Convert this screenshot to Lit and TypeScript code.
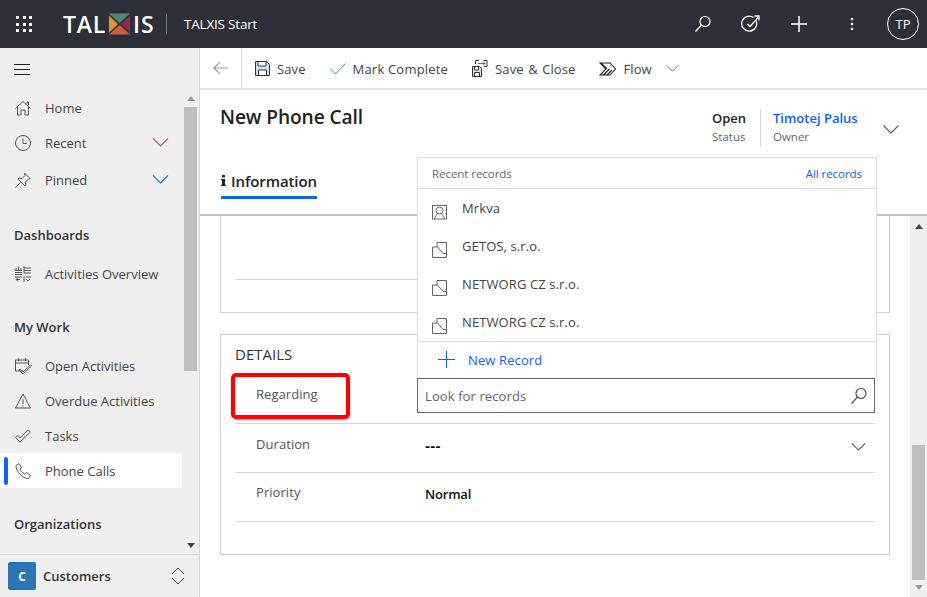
import { LitElement, html, css, svg } from "lit";
import { customElement } from "lit/decorators.js";

const chevron = (w: number, h: number, c: string) => html`<svg width=${w} height=${h} viewBox="0 0 16 9" fill="none" stroke=${c} stroke-width="1.2"><path d="M.5.5 8 8 15.5.5" /></svg>`;
const ic = (p: any, c = "#555") => html`<svg width="18" height="18" viewBox="0 0 18 18" fill="none" stroke=${c} stroke-width="1">${p}</svg>`;

const home = svg`<path d="M1.5 9.500 9 2.500l7.500 7M3.500 7.500V16H7v-5h4v5h3.500V7.500M13 5V3h1.500v3.500"/>`;
const clock = svg`<circle cx="9" cy="9" r="7.500"/><path d="M9 4.500V9.500H13"/>`;
const pin = svg`<path d="M1.500 16.500 6.500 11.500M10.500 2l5.500 5.500-1.500.5-3 3 .5 3-1 1-7-7 1-1 3 .5 3-3z"/>`;
const dash = svg`<path d="M1 5.500H8M1 7.500H8M1 9.500H8M2 5V3M4.500 5V1.500M7 5V3M10 1v7M10 3h7M10 5.500h7M10 8h7M1 12h7M6 14.500H2M4 12.500l-2 2 2 2M10 11v6M12 12h5M12 14l2 2 2-2"/>`;
const cal = svg`<path d="M9 14H1.500V3h13v5M1.500 6h13M4.500 1v3M11.500 1v3"/><path d="M6 12l3 3 7.500-7 1 1-8.500 8-4-4z"/>`;
const warn = svg`<path d="M9 2 1.500 16h15zM9 7v5M9 13.500v1"/>`;
const tasks = svg`<path d="M1.500 10.500 6 15 16.500 5 14 3 6 11 4 8.500z"/>`;
const phone = svg`<path d="M5 1.500 2 3.500C1.500 9 9 17 14.500 16.500L16.500 13.500 12.500 10.500 10.500 12C8.500 11 6.500 8.500 6 7L7.500 5.500z"/>`;
const person = svg`<rect x="1.500" y="2.500" width="14" height="13.500"/><circle cx="8.500" cy="7.500" r="3.500"/><path d="M3.500 16c.5-3 2-4.500 3.500-5.500M13.500 16c-.5-3-2-4.500-3.500-5.500"/>`;
const acct = svg`<path d="M6 6V1.500H15.500V16.500H1.500V6H6.500L12 12.500H15.500"/>`;
const lens = (c: string) => html`<svg width="18" height="18" viewBox="0 0 18 18" fill="none" stroke=${c} stroke-width="1.200"><circle cx="11" cy="6.500" r="5"/><path d="M7.500 10 1.500 16.500"/></svg>`;

@customElement("app-root")
export class AppRoot extends LitElement {
  static styles = css`
    :host { display: block; width: 927px; height: 597px; overflow: hidden; position: relative; font-family: "Open Sans", "Noto Sans", sans-serif; color: #333; font-size: 13px; background: #fff; }
    * { box-sizing: border-box; }
    svg { display: block; flex: none; }
    .top { height: 48px; background: #2c2f38; color: #fff; display: flex; align-items: center; }
    .waffle { margin-left: 16px; width: 16px; display: grid; grid-template-columns: repeat(3, 3px); gap: 3.500px; }
    .waffle i { width: 3px; height: 3px; background: #fff; }
    .logo { margin-left: 31px; display: flex; align-items: center; font: 600 23px "Open Sans", sans-serif; letter-spacing: .8px; width: 91px; }
    .logo svg { margin: 0 2px 0 2px; }
    .vsep { width: 1px; height: 20px; background: #777; margin-left: 12px; }
    .app { margin-left: 17px; font-size: 13.500px; letter-spacing: -.2px; }
    .top-r { margin-left: auto; display: flex; align-items: center; padding-right: 8px; }
    .top-r > * { flex: none; }
    .g29 { margin-left: 29px; }
    .g42 { margin-left: 42px; }
    .avatar { width: 32px; height: 32px; border: 1px solid #fff; border-radius: 50%; display: flex; align-items: center; justify-content: center; font-size: 13px; margin-left: 33px; }
    .body { display: flex; height: 549px; }
    .side { width: 200px; background: #efefef; border-right: 1px solid #d8d8d8; display: flex; flex-direction: column; }
    .burger { height: 42px; flex: none; display: flex; align-items: center; padding-left: 14px; }
    .burger div { width: 16px; height: 11px; border-top: 1px solid #222; border-bottom: 1px solid #222; position: relative; }
    .burger div::after { content: ""; position: absolute; left: 0; right: 0; top: 4px; height: 1px; background: #222; }
    .nav { flex: 1; min-height: 0; display: flex; overflow: hidden; }
    .navlist { width: 182px; flex: none; }
    .row { height: 35px; display: flex; align-items: center; padding-left: 14px; gap: 13px; position: relative; color: #444; }
    .row span { flex: 1; }
    .row svg.ch { margin-right: 13px; }
    .row.on { background: #fff; }
    .row.on::before { content: ""; position: absolute; left: 4px; top: 4px; width: 4px; height: 28px; border-radius: 2px; background: #0f62fe; }
    .pinned { height: 39px; }
    .h { font-weight: 600; color: #333; padding-left: 14px; height: 20px; display: flex; align-items: center; }
    .mt26 { margin-top: 26px; }
    .mt11 { margin-top: 11px; }
    .sb { width: 13px; margin-left: 2px; display: flex; flex-direction: column; align-items: center; }
    .thumb { align-self: stretch; height: 264px; margin-top: 6px; background: #bfbfbf; flex: none; }
    .up { width: 0; height: 0; flex: none; border: 4px solid transparent; border-top: 0; border-bottom: 5px solid #999; margin-top: 6px; }
    .dn { width: 0; height: 0; flex: none; border: 4px solid transparent; border-bottom: 0; border-top: 5px solid #444; margin-top: auto; margin-bottom: 6px; }
    .sfoot { height: 43px; flex: none; border-top: 1px solid #d8d8d8; display: flex; align-items: center; padding-left: 8px; font-weight: 600; color: #333; }
    .sq { width: 28px; height: 28px; background: #2b74b5; color: #fff; border-radius: 2px; display: flex; align-items: center; justify-content: center; font-weight: 700; font-size: 12px; margin-right: 7px; }
    .sfoot svg { margin-left: auto; margin-right: 14px; }
    .main { flex: 1; min-width: 0; display: flex; flex-direction: column; position: relative; }
    .cmd { height: 42px; flex: none; display: flex; align-items: center; border-bottom: 2px solid #e3e3e3; color: #444; letter-spacing: .1px; }
    .back { width: 42px; height: 40px; border-right: 1px solid #d8d8d8; display: flex; align-items: center; justify-content: center; }
    .btn { display: flex; align-items: center; gap: 7px; margin-left: 24px; padding-top: 1px; }
    .btn.first { margin-left: 13px; }
    .mk { letter-spacing: .2px; }
    .wide { word-spacing: 1px; }
    .more { margin-left: 14px; }
    .hdr { height: 126px; flex: none; border-bottom: 2px solid #c4c4c4; padding: 0 20px; }
    .hdr-top { display: flex; align-items: flex-start; padding-top: 15px; height: 69px; }
    h1 { margin: 0; font-size: 19.200px; font-weight: 600; color: #222; letter-spacing: -.12px; line-height: 24px; flex: 1; }
    .meta { display: flex; height: 38px; margin-top: 4px; }
    .meta b { display: block; font-weight: 600; font-size: 13px; line-height: 18px; }
    .meta small { display: block; font-size: 11.500px; color: #666; line-height: 19px; }
    .metaL { width: 48px; color: #222; }
    .metaR { border-left: 1px solid #d8d8d8; padding-left: 12px; width: 123px; }
    .metaR b { color: #1160e8; }
    .hch { margin: 20px 8px 0 0; }
    .tab { display: flex; align-items: center; width: 96px; height: 35px; padding-top: 1px; margin: 5px 0 0 1px; border-bottom: 3px solid #1160e8; font-weight: 600; font-size: 15px; color: #222; gap: 5px; letter-spacing: -.1px; white-space: nowrap; }
    .content { flex: 1; display: flex; min-height: 0; overflow: hidden; }
    .forms { flex: 1; padding: 0 20px; display: flex; flex-direction: column; }
    .card { border: 1px solid #cfcfcf; padding: 0 14px; flex: none; }
    .c1 { height: 97px; border-top: 0; margin-bottom: 21px; }
    .c1 div { height: 64px; border-bottom: 1px solid #d8d8d8; }
    .c2 { height: 221px; }
    .c2 h2 { margin: 0; font-weight: 400; font-size: 15px; line-height: 20px; padding-top: 9px; height: 40px; color: #333; }
    .f { display: flex; height: 49px; border-bottom: 1px solid #d8d8d8; color: #555; }
    .f label { width: 182px; flex: none; padding-left: 21px; letter-spacing: .06px; }
    .f1 label { padding-top: 10px; }
    .f2 { padding-top: 11px; }
    .f3 { padding-top: 10px; }
    .val { font-weight: 600; color: #111; letter-spacing: -.2px; padding: 2px 0 0 8px; flex: 1; display: flex; justify-content: space-between; }
    .dashes { font-family: "Liberation Sans", sans-serif; font-size: 15px; letter-spacing: .3px; line-height: 18px; }
    .val svg { margin: 6px 9px 0 0; }
    .input { flex: 1; margin-top: 3px; height: 35px; border: 1px solid #666; display: flex; align-items: center; justify-content: space-between; padding: 0 6px 0 7px; color: #666; letter-spacing: .1px; background: #fff; }
    .msb { width: 17px; flex: none; background: #f0f0f0; display: flex; flex-direction: column; align-items: center; }
    .msb .up { margin-top: 8px; border-bottom-color: #444; }
    .msb .thumb { margin: auto 2px 0; height: 135px; }
    .msb .dn { margin: 5px 0 7px; border-top-color: #999; }
    .fly { position: absolute; left: 217px; top: 109px; width: 460px; height: 221px; background: #fff; border: 1px solid #dcdcdc; border-bottom: 0; display: flex; flex-direction: column; }
    .fh { height: 31px; flex: none; border-bottom: 1px solid #dcdcdc; display: flex; justify-content: space-between; align-items: center; padding: 0 14px; font-size: 11.500px; color: #666; letter-spacing: -.05px; }
    .fh a { color: #1160e8; }
    .fl { flex: 1; border-bottom: 1px solid #dcdcdc; }
    .fi { height: 38px; display: flex; padding: 10px 0 0 13px; gap: 13px; color: #444; letter-spacing: .1px; }
    .fi svg { margin-top: 4px; }
    .fn { height: 37px; flex: none; display: flex; align-items: center; padding: 0 0 2px 20px; gap: 13px; color: #1160e8; letter-spacing: .12px; }
    .red { position: absolute; left: 31px; top: 325px; width: 119px; height: 46px; border: 4px solid #f00; border-radius: 5px; box-shadow: 0 1px 2px rgba(0,0,0,.35); }
  `;

  render() {
    return html`
      <div class="top">
        <div class="waffle">${Array.from({ length: 9 }, () => html`<i></i>`)}</div>
        <div class="logo">TAL<svg width="23" height="24" viewBox="0 0 24 24">
          <polygon points="1,1 23,1 12,11" fill="#4f8a6f"/><polygon points="1,3 10.500,12 1,21" fill="#e0913f"/><polygon points="23,3 13.500,12 23,21" fill="#8c2f4b"/><polygon points="1,23 23,23 12,13" fill="#c8603c"/></svg>IS</div>
        <div class="vsep"></div>
        <div class="app">TALXIS Start</div>
        <div class="top-r">
          ${lens("#fff")}
          <svg class="g29" width="20" height="20" viewBox="0 0 20 20" fill="none" stroke="#fff" stroke-width="1.300"><path d="M15 6.500A7.500 7.500 0 1 1 12.500 3.500"/><path d="M6.500 10l2.500 2.500L18 2.500M13.500 2H18v4.500"/></svg>
          <svg class="g29" width="18" height="18" viewBox="0 0 18 18" stroke="#fff" stroke-width="1.500"><path d="M9 1v16M1 9h16"/></svg>
          <svg class="g42" width="4" height="14" viewBox="0 0 4 14" fill="#fff"><circle cx="2" cy="2" r="1.300"/><circle cx="2" cy="7" r="1.300"/><circle cx="2" cy="12" r="1.300"/></svg>
          <div class="avatar">TP</div>
        </div>
      </div>
      <div class="body">
        <div class="side">
          <div class="burger"><div></div></div>
          <div class="nav">
            <div class="navlist">
              <div class="row">${ic(home)}<span>Home</span></div>
              <div class="row">${ic(clock)}<span>Recent</span><svg class="ch" width="17" height="9" viewBox="0 0 16 9" fill="none" stroke="#b5673a" stroke-width="1.100"><path d="M.5.5 8 8 15.500.5"/></svg></div>
              <div class="row pinned">${ic(pin)}<span>Pinned</span><svg class="ch" width="17" height="9" viewBox="0 0 16 9" fill="none" stroke="#2b74b5" stroke-width="1.100"><path d="M.5.5 8 8 15.500.5"/></svg></div>
              <div class="h mt26">Dashboards</div>
              <div class="row mt11">${ic(dash)}<span>Activities Overview</span></div>
              <div class="h mt26">My Work</div>
              <div class="row mt11">${ic(cal)}<span>Open Activities</span></div>
              <div class="row">${ic(warn)}<span>Overdue Activities</span></div>
              <div class="row">${ic(tasks)}<span>Tasks</span></div>
              <div class="row on">${ic(phone)}<span>Phone Calls</span></div>
              <div class="h mt26">Organizations</div>
            </div>
            <div class="sb"><div class="up"></div><div class="thumb"></div><div class="dn"></div></div>
          </div>
          <div class="sfoot"><div class="sq">C</div>Customers
            <svg width="14" height="18" viewBox="0 0 14 18" fill="none" stroke="#444"><path d="M1 7 7 1l6 6M1 11l6 6 6-6"/></svg>
          </div>
        </div>
        <div class="main">
          <div class="cmd">
            <div class="back"><svg width="16" height="12" viewBox="0 0 16 12" fill="none" stroke="#999" stroke-width="1.100"><path d="M15 6H1M6.500.5 1 6l5.500 5.500"/></svg></div>
            <div class="btn first"><svg width="15" height="15" viewBox="0 0 15 15"><path d="M.5.5h11l3 3v11H.5z" fill="#cfe4f7" stroke="#333"/><path d="M3 1v4h8V1" fill="#fff" stroke="#333"/><path d="M3.500 14V9h8v5" fill="#fff" stroke="#333"/></svg><span>Save</span></div>
            <div class="btn"><svg width="16" height="12" viewBox="0 0 16 12" fill="none" stroke="#3e9b5a"><path d="M.5 6 5.500 11 15.500.5"/></svg><span class="mk">Mark Complete</span></div>
            <div class="btn"><svg width="16" height="17" viewBox="0 0 16 17" fill="none" stroke="#333"><path d="M.5 6.500h7l2 2v8H.5z" fill="#cfe4f7"/><path d="M2.500 7v3h4V7M2.500 16v-3.500h5V16" fill="#fff"/><path d="M3.500 4V.5H7M11.500.5H15v6h-3"/><path d="M6 3.500h7M11 1.500l2 2-2 2" stroke="#2b74b5"/></svg><span class="wide">Save &amp; Close</span></div>
            <div class="btn"><svg width="17" height="14" viewBox="0 0 17 14" fill="none" stroke="#222" stroke-width="1.100"><path d="M1 1h10l5.500 6-5.500 6H1l6-6zM4.500 13l6-6M8 13l5-5M2 1l6 6"/></svg><span>Flow</span></div>
            <div class="more">${chevron(13, 7, "#667")}</div>
          </div>
          <div class="hdr">
            <div class="hdr-top">
              <h1>New Phone Call</h1>
              <div class="meta">
                <div class="metaL"><b>Open</b><small>Status</small></div>
                <div class="metaR"><b>Timotej Palus</b><small>Owner</small></div>
              </div>
              <div class="hch">${chevron(16, 9, "#7a5a2a")}</div>
            </div>
            <div class="tab"><svg width="5" height="11" viewBox="0 0 5 11" fill="#222"><rect x="1" y="0" width="3" height="2.500"/><path d="M0 4h4v6h1v1H0v-1h1V5H0z"/></svg>Information</div>
          </div>
          <div class="content">
            <div class="forms">
              <div class="card c1"><div></div></div>
              <div class="card c2">
                <h2>DETAILS</h2>
                <div class="f f1"><label>Regarding</label>
                  <div class="input"><span>Look for records</span>${lens("#555")}</div>
                </div>
                <div class="f f2"><label>Duration</label><div class="val"><span class="dashes">---</span>${chevron(15, 8, "#555")}</div></div>
                <div class="f f3"><label>Priority</label><div class="val"><span>Normal</span></div></div>
              </div>
            </div>
            <div class="msb"><div class="up"></div><div class="thumb"></div><div class="dn"></div></div>
          </div>
          <div class="fly">
            <div class="fh"><span>Recent records</span><a>All records</a></div>
            <div class="fl">
              <div class="fi">${ic(person, "#666")}<span>Mrkva</span></div>
              <div class="fi">${ic(acct, "#666")}<span>GETOS, s.r.o.</span></div>
              <div class="fi">${ic(acct, "#666")}<span>NETWORG CZ s.r.o.</span></div>
              <div class="fi">${ic(acct, "#666")}<span>NETWORG CZ s.r.o.</span></div>
            </div>
            <div class="fn"><svg width="17" height="17" viewBox="0 0 17 17" stroke="#1160e8"><path d="M8.500 0v17M0 8.500h17"/></svg><span>New Record</span></div>
          </div>
          <div class="red"></div>
        </div>
      </div>
    `;
  }
}
